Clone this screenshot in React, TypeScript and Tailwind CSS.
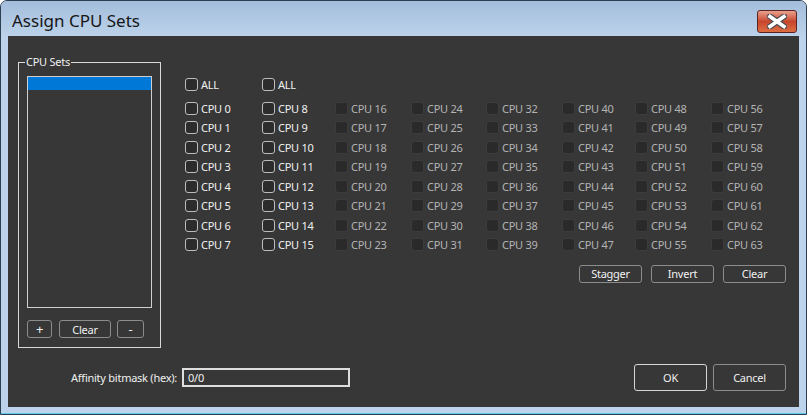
import React from "react";

const font = { fontFamily: '"Noto Sans", "Open Sans", sans-serif' };

const colWidths = "grid-cols-[77px_73px_76px_75px_76px_73px_76px_1fr]";

function Check({ label, enabled }: { label: string; enabled: boolean }) {
  return (
    <div className="flex items-center h-[19.5px] whitespace-nowrap">
      <span
        className={
          enabled
            ? "w-[13px] h-[13px] shrink-0 rounded-[3px] border border-[#bdbdbd] bg-[#2c2c2c]"
            : "w-[13px] h-[13px] shrink-0 rounded-[3px] border border-[#3c3c3c] bg-[#2a2a2a]"
        }
      />
      <span
        className={
          enabled
            ? "ml-[3px] text-[11px] tracking-[-0.25px] leading-none text-[#f0f0f0]"
            : "ml-[3px] text-[11px] tracking-[-0.25px] leading-none text-[#b4b4b4]"
        }
      >
        {label}
      </span>
    </div>
  );
}

function Btn({ children, w, h = "h-[18px]", strong = false }: { children: React.ReactNode; w: string; h?: string; strong?: boolean }) {
  return (
    <button
      className={`${w} ${h} shrink-0 flex items-center justify-center rounded-[3px] border ${
        strong ? "border-[#d6d6d6]" : "border-[#8c8c8c]"
      } bg-[#373737] text-[11px] tracking-[-0.25px] leading-none text-[#f0f0f0]`}
    >
      {children}
    </button>
  );
}

export default function App() {
  const rows = Array.from({ length: 8 }, (_, r) => r);
  const cols = Array.from({ length: 8 }, (_, c) => c);

  return (
    <div style={font} className="w-[807px] h-[415px] bg-white">
      <div className="w-[807px] h-[415px] flex flex-col border border-[#2b3e52] rounded-t-[7px] bg-[#bdd3eb] overflow-hidden">
        {/* title bar */}
        <div className="h-[35px] shrink-0 flex items-start justify-between bg-gradient-to-b from-[#a3bddb] to-[#bcd2ea]">
          <div className="pl-[11px] pt-[8px] text-[17px] leading-[24px] text-[#161616]">Assign CPU Sets</div>
          <div className="mt-[9px] mr-[9px] w-[40px] h-[23px] rounded-[3px] border border-[#5b2424] bg-gradient-to-b from-[#e8a08c] via-[#c8452e] to-[#dc6e42] flex items-center justify-center">
            <svg width="20" height="15" viewBox="0 0 20 15">
              <path d="M3 2.5 L17 12.5 M17 2.5 L3 12.5" stroke="#4b4b55" strokeWidth="6" strokeLinecap="square" />
              <path d="M3 2.5 L17 12.5 M17 2.5 L3 12.5" stroke="#ffffff" strokeWidth="3.6" strokeLinecap="square" />
            </svg>
          </div>
        </div>

        {/* client area */}
        <div className="mx-[7px] w-[791px] h-[371px] shrink-0 bg-[#373737] flex flex-col pt-[26px] pl-[10px] pr-[13px]">
          <div className="flex">
            {/* CPU Sets group */}
            <div className="relative w-[143px] h-[286px] shrink-0 border border-[#d8d8d8] pl-[8px] pt-[13px]">
              <span className="absolute -top-[8px] left-[6px] px-[1px] bg-[#373737] text-[11px] tracking-[-0.25px] leading-[14px] text-[#f0f0f0]">
                CPU Sets
              </span>
              <div className="w-[125px] h-[232px] border border-[#cfcfcf] bg-[#373737]">
                <div className="h-[13px] bg-[#0078d7]" />
              </div>
              <div className="flex mt-[12px]">
                <Btn w="w-[25px]">
                  <span className="text-[13px]">+</span>
                </Btn>
                <div className="ml-[7px]">
                  <Btn w="w-[52px]">Clear</Btn>
                </div>
                <div className="ml-[6px]">
                  <Btn w="w-[27px]">
                    <span className="text-[13px]">-</span>
                  </Btn>
                </div>
              </div>
            </div>

            {/* CPU grid */}
            <div className="ml-[24px] pt-[13px] flex-1 flex flex-col">
              <div className={`grid ${colWidths} mb-[4px]`}>
                <Check label="ALL" enabled />
                <Check label="ALL" enabled />
              </div>
              <div className={`grid ${colWidths}`}>
                {rows.map((r) =>
                  cols.map((c) => <Check key={`${r}-${c}`} label={`CPU ${c * 8 + r}`} enabled={c < 2} />)
                )}
              </div>
              <div className="flex justify-end gap-[9px] mt-[10px]">
                <Btn w="w-[63px]">Stagger</Btn>
                <Btn w="w-[63px]">Invert</Btn>
                <Btn w="w-[63px]">Clear</Btn>
              </div>
            </div>
          </div>

          {/* bottom row */}
          <div className="flex items-center mt-[16px] h-[27px]">
            <div className="w-[159px] text-right text-[11px] tracking-[-0.25px] leading-none text-[#f0f0f0] whitespace-nowrap">
              Affinity bitmask (hex):
            </div>
            <div className="ml-[5px] w-[168px] h-[19px] border-2 border-[#dedede] bg-[#373737] flex items-center pl-[4px] text-[11px] tracking-[-0.25px] leading-none text-[#f0f0f0]">
              0/0
            </div>
            <div className="flex-1" />
            <Btn w="w-[73px]" h="h-[27px]" strong>
              OK
            </Btn>
            <div className="ml-[6px]">
              <Btn w="w-[73px]" h="h-[27px]">
                Cancel
              </Btn>
            </div>
          </div>
        </div>
        <div className="flex-1" />
        <div className="h-[1px] bg-[#5ccbe6]" />
      </div>
    </div>
  );
}
